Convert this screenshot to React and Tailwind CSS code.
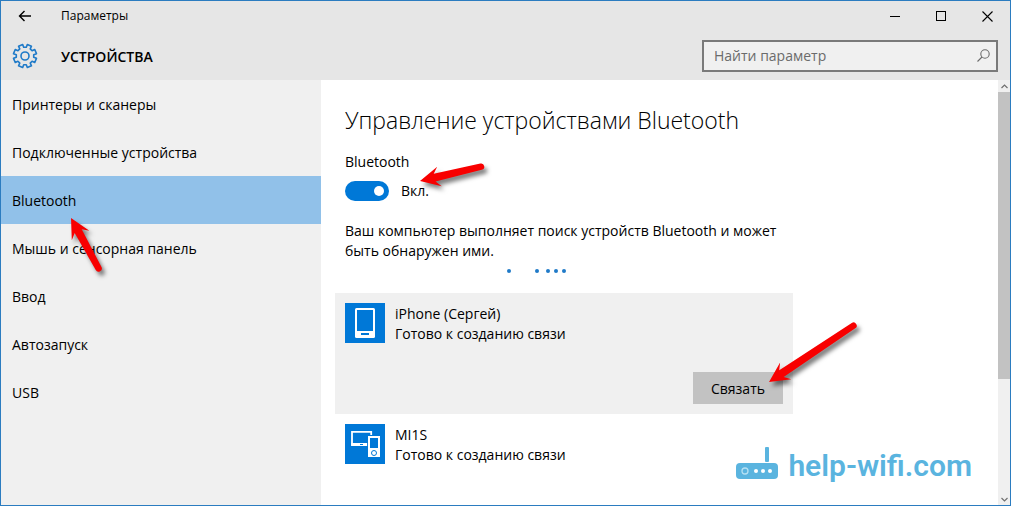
import React, { useState } from 'react';

const navItems = [
  'Принтеры и сканеры',
  'Подключенные устройства',
  'Bluetooth',
  'Мышь и сенсорная панель',
  'Ввод',
  'Автозапуск',
  'USB'
];

const GearIcon = () => {
  const teeth = 8;
  const points = [];
  for (let i = 0; i < teeth; i++) {
    const a = ((i + 0.5) * 360) / teeth - 90;
    [[-14, 8.8], [-11, 11.7], [11, 11.7], [14, 8.8]].forEach(([offset, r]) => {
      const rad = ((a + offset) * Math.PI) / 180;
      points.push(`${(13 + r * Math.cos(rad)).toFixed(2)},${(13 + r * Math.sin(rad)).toFixed(2)}`);
    });
  }
  return (
    <svg className="w-[26px] h-[26px]" viewBox="0 0 26 26" fill="none" stroke="#1f7ac8" strokeWidth="1.600" strokeLinejoin="round" aria-hidden="true">
      <polygon points={points.join(' ')} />
      <circle cx="13" cy="13" r="4" />
    </svg>
  );
};

const PhoneIcon = () => (
  <svg className="w-10 h-10 shrink-0 bg-[#0078d7]" viewBox="0 0 40 40" aria-hidden="true">
    <rect x="10" y="5" width="20" height="30" rx="1.500" fill="#fff" />
    <rect x="12" y="7" width="16" height="21" fill="#0078d7" />
    <rect x="16" y="30" width="8" height="2" fill="#0078d7" />
  </svg>
);

const MultiDeviceIcon = () => (
  <svg className="w-10 h-10 shrink-0 bg-[#0078d7]" viewBox="0 0 40 40" aria-hidden="true">
    <path d="M26.200 11V7.800H7V20.500H22" fill="none" stroke="#fff" strokeWidth="1.800" />
    <rect x="6.100" y="19" width="16" height="3" fill="#fff" />
    <rect x="15" y="20" width="3" height="1" fill="#0078d7" />
    <rect x="23" y="12" width="12" height="21" fill="#fff" />
    <rect x="25" y="14" width="8" height="10" fill="#0078d7" />
    <circle cx="29" cy="29" r="2.500" fill="none" stroke="#0078d7" strokeWidth="1" />
  </svg>
);

// Tip at (x1, y1), round tail at (x2, y2)
const Arrow = ({ className, width, height, x1, y1, x2, y2 }) => {
  const length = Math.hypot(x2 - x1, y2 - y1);
  const angle = (Math.atan2(y2 - y1, x2 - x1) * 180) / Math.PI;
  return (
    <svg
      className={`absolute z-10 pointer-events-none overflow-visible drop-shadow-[3px_4px_2px_rgba(0,0,0,0.5)] ${className}`}
      width={width}
      height={height}
      aria-hidden="true"
    >
      <g transform={`translate(${x1} ${y1}) rotate(${angle})`} fill="#f80000">
        <path d={`M0 0L20 -10L15 -4L${length - 3} -3.200A3.200 3.200 0 0 1 ${length - 3} 3.200L15 4L20 10Z`} />
      </g>
    </svg>
  );
};

const TitleBar = () => (
  <div className="flex items-center h-[30px]">
    <button type="button" aria-label="Назад" className="w-12 h-full flex items-center justify-center">
      <svg width="14" height="12" viewBox="0 0 14 12" fill="none" stroke="#000" strokeWidth="1.400" aria-hidden="true">
        <path d="M13 6H1.500M6.500 1L1.500 6L6.500 11" />
      </svg>
    </button>
    <span className="flex-1 pl-3 text-xs">Параметры</span>
    <button type="button" aria-label="Свернуть" className="w-[46px] h-full flex items-center justify-center">
      <svg width="10" height="10" aria-hidden="true"><path d="M0 5.500H10" stroke="#000" /></svg>
    </button>
    <button type="button" aria-label="Развернуть" className="w-[46px] h-full flex items-center justify-center">
      <svg width="10" height="10" aria-hidden="true"><rect x="0.500" y="0.500" width="9" height="9" fill="none" stroke="#000" /></svg>
    </button>
    <button type="button" aria-label="Закрыть" className="w-[46px] h-full flex items-center justify-center">
      <svg width="11" height="11" aria-hidden="true"><path d="M0.500 0.500L10.500 10.500M10.500 0.500L0.500 10.500" stroke="#000" strokeWidth="1.100" /></svg>
    </button>
  </div>
);

const Header = () => (
  <div className="flex items-center h-[49px] pl-[11px] pr-3">
    <GearIcon />
    <h1 className="flex-1 pl-[23px] pt-0.5 text-sm font-semibold">УСТРОЙСТВА</h1>
    <div className="flex items-center w-[296px] h-8 border-2 border-[#7a7a7a] bg-[#f0f0f0]">
      <input
        type="text"
        aria-label="Найти параметр"
        placeholder="Найти параметр"
        className="flex-1 min-w-0 h-full px-2.5 text-sm bg-transparent outline-none placeholder:text-[#6b6b6b]"
      />
      <svg className="mr-1.5" width="13" height="13" viewBox="0 0 13 13" fill="none" stroke="#6b6b6b" strokeWidth="1.100" aria-hidden="true">
        <circle cx="8" cy="5" r="4.200" />
        <path d="M5 8L0.500 12.500" />
      </svg>
    </div>
  </div>
);

const Sidebar = ({ active, onSelect }) => (
  <nav className="w-80 shrink-0 bg-[#f0f0f0]">
    {navItems.map((item) => (
      <div key={item} className="relative">
        <button
          type="button"
          onClick={() => onSelect(item)}
          className={`w-full h-12 px-[11px] pt-0.5 text-left ${item === active ? 'bg-[#91c1e9]' : ''}`}
        >
          {item}
        </button>
        {item === 'Bluetooth' && (
          <Arrow className="left-[70px] top-[42px]" width={32} height={54} x1={0} y1={0} x2={29} y2={53} />
        )}
      </div>
    ))}
  </nav>
);

const Device = ({ icon, name }) => (
  <div className="flex gap-2.5">
    {icon}
    <div className="pt-px">
      <p>{name}</p>
      <p>Готово к созданию связи</p>
    </div>
  </div>
);

const ScrollBar = () => (
  <div className="flex flex-col w-3 shrink-0 bg-[#f0f0f0]" aria-hidden="true">
    <div className="h-3 flex items-center justify-center">
      <svg width="7" height="5" fill="none" stroke="#707070" strokeWidth="1.200"><path d="M0.500 4L3.500 1L6.500 4" /></svg>
    </div>
    <div className="h-[287px] bg-[#c2c2c2]" />
    <div className="mt-auto h-3 flex items-center justify-center">
      <svg width="7" height="5" fill="none" stroke="#707070" strokeWidth="1.200"><path d="M0.500 1L3.500 4L6.500 1" /></svg>
    </div>
  </div>
);

const SiteLogo = () => (
  <div className="absolute right-[26px] bottom-5 flex items-center gap-2.5 text-[#5ab4df]">
    <svg className="mb-1.5" width="42" height="32" viewBox="0 0 42 32" aria-hidden="true">
      <rect x="29" y="0" width="4" height="15" rx="1" fill="currentColor" />
      <rect x="0" y="16" width="42" height="16" rx="4" fill="currentColor" />
      <circle cx="9" cy="24" r="3" fill="none" stroke="#b5e0f3" strokeWidth="1.300" />
      <circle cx="20" cy="24" r="2" fill="#fff" />
      <circle cx="27" cy="24" r="2" fill="#fff" />
      <circle cx="34" cy="24" r="2" fill="#fff" />
    </svg>
    <span className="font-['Roboto',sans-serif] text-[30px] leading-8 font-semibold">help-wifi.com</span>
  </div>
);

const BluetoothPage = () => {
  const [enabled, setEnabled] = useState(true);

  return (
    <main className="relative flex-1 min-w-0 pl-3.5 pt-6 pb-7 bg-white">
      <div className="px-2.5">
        <h2 className="text-[23px] leading-8 font-light">Управление устройствами Bluetooth</h2>
        <p className="mt-4" id="bluetooth-label">Bluetooth</p>
        <div className="relative mt-2 w-fit">
          <label className="flex items-center gap-3">
            <input
              type="checkbox"
              role="switch"
              aria-labelledby="bluetooth-label"
              checked={enabled}
              onChange={(e) => setEnabled(e.target.checked)}
              className="peer sr-only"
            />
            <span className="flex items-center justify-start peer-checked:justify-end w-11 h-5 px-[5px] rounded-full bg-gray-500 peer-checked:bg-[#0078d7]">
              <span className="w-2.5 h-2.5 rounded-full bg-white" />
            </span>
            <span className="pt-px">{enabled ? 'Вкл.' : 'Откл.'}</span>
          </label>
          <Arrow className="left-[75px] top-0" width={64} height={16} x1={0} y1={1} x2={64} y2={-14} />
        </div>
        <p className="mt-5 max-w-[448px]">
          Ваш компьютер выполняет поиск устройств Bluetooth и может быть обнаружен ими.
        </p>
        <svg className="mt-0.5 ml-40 h-4 w-[62px]" viewBox="0 0 62 16" fill="#1f7ac8" role="img" aria-label="Поиск устройств">
          {[4, 32, 43, 51, 59].map((x) => (
            <circle key={x} cx={x} cy="8" r="2" />
          ))}
        </svg>
      </div>

      <ul className="mt-3.5 max-w-[458px]">
        <li className="p-2.5 bg-[#f0f0f0]">
          <Device icon={<PhoneIcon />} name="iPhone (Сергей)" />
          <div className="relative mt-7 ml-auto w-[90px]">
            <button type="button" className="w-full h-8 pt-px bg-[#c2c2c2]">Связать</button>
            <Arrow className="left-[76px] top-2.5" width={90} height={16} x1={0} y1={0} x2={87} y2={-58} />
          </div>
        </li>
        <li className="p-2.5">
          <Device icon={<MultiDeviceIcon />} name="MI1S" />
        </li>
      </ul>

      <SiteLogo />
    </main>
  );
};

const App = () => {
  const [active, setActive] = useState('Bluetooth');

  return (
    <div className="min-h-screen flex flex-col border border-[#2b7cc0] bg-[#e6e6e6] font-['Open_Sans','Noto_Sans',sans-serif] text-sm text-black">
      <TitleBar />
      <Header />
      <div className="flex flex-1">
        <Sidebar active={active} onSelect={setActive} />
        <BluetoothPage />
        <ScrollBar />
      </div>
    </div>
  );
};

export default App;
